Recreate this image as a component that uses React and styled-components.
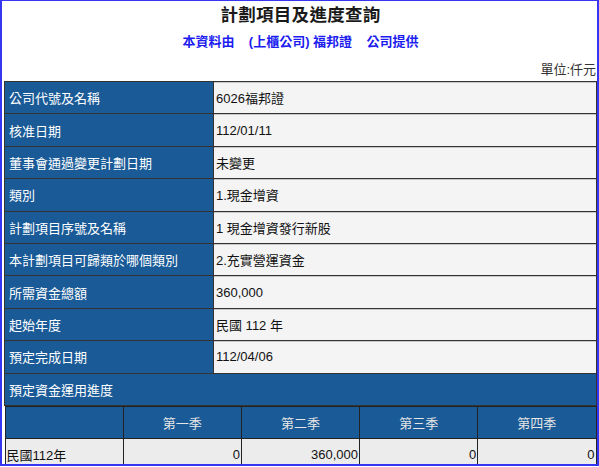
import React from "react";
import styled, { createGlobalStyle } from "styled-components";

const GlobalStyle = createGlobalStyle`
  html, body {
    margin: 0;
    padding: 0;
    background: #fff;
  }
  body {
    font-family: "Liberation Sans", Arial, "Noto Sans CJK TC", sans-serif;
  }
`;

const Frame = styled.div`
  box-sizing: border-box;
  width: 599px;
  height: 466px;
  border: 2px solid #3535f2;
  border-top-width: 1px;
  overflow: hidden;
  padding: 0 0 0 2px;
`;

const Title = styled.h1`
  margin: 3px 0 0 0;
  text-align: center;
  font-size: 17.5px;
  line-height: 22px;
  font-weight: bold;
  color: #1a1a1a;
  letter-spacing: 0.3px;
`;

const Source = styled.div`
  margin-top: 7px;
  text-align: center;
  font-size: 13px;
  line-height: 18px;
  font-weight: bold;
  color: #1d1df0;
`;

const Unit = styled.div`
  margin-top: 11px;
  text-align: right;
  font-size: 13px;
  line-height: 16px;
  color: #333;
  padding-right: 1px;
`;

const Table = styled.table`
  margin-top: 3px;
  width: 593px;
  border-collapse: collapse;
  table-layout: fixed;
  font-size: 13px;
  td {
    border: 1px solid #333;
    padding: 0 4px;
    height: 31.4px;
  }
`;

const Label = styled.td`
  width: 200px;
  background: #195a97;
  color: #fff;
`;

const Value = styled.td`
  background: #f4f4f4;
  color: #111;
  box-shadow: inset 0 1px 0 #c8c8c8;
  padding-left: 2px !important;
`;

const Section = styled.td`
  background: #195a97;
  color: #fff;
`;

const Inner = styled.table`
  width: 100%;
  border-collapse: collapse;
  table-layout: fixed;
  font-size: 13px;
  td {
    border: 1px solid #222;
  }
`;

const Quarter = styled.td`
  background: #195a97;
  color: #e6e6e6;
  text-align: center;
  height: 30px;
`;

const Cell = styled.td`
  background: #ececec;
  color: #111;
  text-align: ${(p) => (p.$left ? "left" : "right")};
  padding: ${(p) => (p.$left ? "0 0 0 1px" : "0 1px 0 0")} !important;
  height: 28px;
`;

const rows = [
  ["公司代號及名稱", "6026福邦證"],
  ["核准日期", "112/01/11"],
  ["董事會通過變更計劃日期", "未變更"],
  ["類別", "1.現金增資"],
  ["計劃項目序號及名稱", "1 現金增資發行新股"],
  ["本計劃項目可歸類於哪個類別", "2.充實營運資金"],
  ["所需資金總額", "360,000"],
  ["起始年度", "民國 112 年"],
  ["預定完成日期", "112/04/06"],
];

const quarters = ["", "第一季", "第二季", "第三季", "第四季"];
const amounts = ["0", "360,000", "0", "0"];

export default function App() {
  return (
    <>
      <GlobalStyle />
      <Frame>
        <Title>計劃項目及進度查詢</Title>
        <Source>本資料由&nbsp;&nbsp;&nbsp;&nbsp;(上櫃公司) 福邦證&nbsp;&nbsp;&nbsp;&nbsp;公司提供</Source>
        <Unit>單位:仟元</Unit>
        <Table>
          <tbody>
            {rows.map(([k, v]) => (
              <tr key={k}>
                <Label>{k}</Label>
                <Value>{v}</Value>
              </tr>
            ))}
            <tr>
              <Section colSpan={2}>預定資金運用進度</Section>
            </tr>
            <tr>
              <td colSpan={2} style={{ padding: 0, border: "none" }}>
                <Inner>
                  <tbody>
                    <tr>
                      {quarters.map((q, i) => (
                        <Quarter key={i}>{q}</Quarter>
                      ))}
                    </tr>
                    <tr>
                      <Cell $left>民國112年</Cell>
                      {amounts.map((a, i) => (
                        <Cell key={i}>{a}</Cell>
                      ))}
                    </tr>
                  </tbody>
                </Inner>
              </td>
            </tr>
          </tbody>
        </Table>
      </Frame>
    </>
  );
}
